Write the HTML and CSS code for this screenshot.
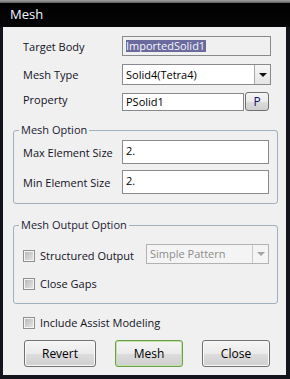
FILE: index.html
```html
<!DOCTYPE html>
<html lang="en">
  <head>
    <meta charset="UTF-8" />
    <meta name="viewport" content="width=device-width, initial-scale=1.0" />
    <title>Mesh</title>
    <link rel="stylesheet" href="styles.css">
  </head>
  <body>
    <div class="window">
      <div class="titlebar">Mesh</div>
      <div class="frame">
        <form class="content">
          <div class="row row-target">
            <label class="label">Target Body</label>
            <div class="field readonly"><span class="selected">ImportedSolid1</span></div>
          </div>

          <div class="row row-type">
            <label class="label">Mesh Type</label>
            <div class="combo">
              <span class="combo-text">Solid4(Tetra4)</span>
              <span class="combo-arrow"></span>
            </div>
          </div>

          <div class="row row-property">
            <label class="label">Property</label>
            <div class="field field-short">PSolid1</div>
            <button type="button" class="small-btn">P</button>
          </div>

          <fieldset class="group group-option">
            <legend>Mesh Option</legend>
            <div class="row row-size">
              <label class="label">Max Element Size</label>
              <div class="field field-tall">2.</div>
            </div>
            <div class="row row-size row-min">
              <label class="label">Min Element Size</label>
              <div class="field field-tall">2.</div>
            </div>
          </fieldset>

          <fieldset class="group group-output">
            <legend>Mesh Output Option</legend>
            <div class="row row-structured">
              <label class="check check-wide"><span class="box"></span>Structured Output</label>
              <div class="combo combo-disabled">
                <span class="combo-text">Simple Pattern</span>
                <span class="combo-arrow"></span>
              </div>
            </div>
            <div class="row row-gaps">
              <label class="check"><span class="box"></span>Close Gaps</label>
            </div>
          </fieldset>

          <div class="row row-assist">
            <label class="check"><span class="box"></span>Include Assist Modeling</label>
          </div>

          <div class="buttons">
            <button type="button" class="btn btn-revert">Revert</button>
            <button type="button" class="btn btn-default">Mesh</button>
            <button type="button" class="btn">Close</button>
          </div>
        </form>
      </div>
    </div>
  </body>
</html>
```

FILE: styles.css
```css
* {
  margin: 0;
  padding: 0;
  box-sizing: border-box;
}

body {
  font-family: "Open Sans", "Noto Sans", sans-serif;
  font-size: 11px;
  color: #12121e;
  background-color: #14141c;
}

.window {
  width: 290px;
  height: 379px;
  display: flex;
  flex-direction: column;
  background-color: #14141c;
}

.titlebar {
  height: 27px;
  padding: 3px 0 0 10px;
  line-height: 23px;
  font-size: 13px;
  color: #f4f6ff;
  background: linear-gradient(#a4a4a4 0, #5a5a5a 3px, #000 3px, #060608 100%);
}

.frame {
  flex: 1;
  padding: 0 4px 4px 3px;
}

.content {
  height: 100%;
  background-color: #f0f0f0;
  padding: 9px 8px 8px 10px;
}

.row {
  display: flex;
  align-items: center;
  padding-left: 10px;
}

.label {
  width: 99px;
  flex-shrink: 0;
}

.field {
  width: 149px;
  height: 20px;
  border: 1px solid #8a8a8e;
  background-color: #fff;
  padding: 1px 0 0 3px;
  line-height: 16px;
  color: #000;
}

.field.readonly {
  background-color: #f0f0f0;
  padding-top: 3px;
  line-height: 12px;
}

.selected {
  display: inline-block;
  background-color: #6a6a9c;
  color: #f6f6ff;
  padding-right: 1px;
}

.row-type {
  margin-top: 8px;
}

.combo {
  width: 149px;
  height: 21px;
  display: flex;
  border: 1px solid #8a8a8e;
  background-color: #fff;
  color: #000;
}

.combo-text {
  flex: 1;
  padding-left: 3px;
  line-height: 19px;
}

.combo-arrow {
  width: 16px;
  border-left: 1px solid #a8a8a8;
  background: linear-gradient(#f6f6f6, #e4e4e4);
  display: flex;
  align-items: center;
  justify-content: center;
}

.combo-arrow::after {
  content: "";
  border-left: 4px solid transparent;
  border-right: 4px solid transparent;
  border-top: 4px solid #111;
}

.row-property {
  margin-top: 7px;
  align-items: flex-start;
}

.field-short {
  width: 122px;
  height: 18px;
  margin-top: 1px;
  line-height: 15px;
  padding-top: 0;
}

.small-btn {
  width: 24px;
  height: 19px;
  margin-left: 1px;
  border: 1px solid #707070;
  border-radius: 3px;
  background: linear-gradient(#f4f4f4, #ebebeb 50%, #dcdcdc 51%, #cfcfcf);
  font-family: inherit;
  font-size: 12px;
  line-height: 15px;
  color: #10106a;
}

.group {
  min-inline-size: 0;
  border: 1px solid #9fb1be;
  border-radius: 3px;
  padding: 0 8px 9px 5px;
}

.group legend {
  padding: 0 2px;
  line-height: 16px;
  color: #1a1a30;
}

.group .row {
  padding-left: 4px;
}

.group-option {
  margin-top: 11px;
  padding-top: 2px;
}

.field-tall {
  height: 24px;
  padding-top: 2px;
}

.row-min {
  margin-top: 6px;
}

.group-output {
  margin-top: 13px;
  padding-top: 11px;
  padding-bottom: 13px;
}

.check {
  display: flex;
  align-items: center;
  height: 12px;
  line-height: 12px;
  white-space: nowrap;
}

.box {
  width: 12px;
  height: 12px;
  margin-right: 5px;
  border: 1px solid #8e8f8f;
  background: linear-gradient(135deg, #b4b4b4, #e8e8e8);
  box-shadow: inset 0 0 0 1px #f4f4f4;
}

.check-wide {
  width: 123px;
  flex-shrink: 0;
  margin-top: 4px;
}

.combo-disabled {
  width: 125px;
  height: 20px;
  border-color: #b2b2b2;
  background-color: #f4f4f4;
  color: #8c8c8c;
}

.combo-disabled .combo-text {
  line-height: 18px;
}

.combo-disabled .combo-arrow {
  border-left-color: #c8c8c8;
  background: #f4f4f4;
}

.combo-disabled .combo-arrow::after {
  border-top-color: #a4a4a4;
}

.row-gaps {
  margin-top: 14px;
}

.row-assist {
  margin-top: 13px;
}

.buttons {
  display: flex;
  justify-content: space-between;
  margin-top: 11px;
  padding: 0 8px 0 11px;
}

.btn {
  width: 68px;
  height: 27px;
  border: 1px solid #707070;
  border-radius: 3px;
  background: linear-gradient(#f4f4f4, #ebebeb 50%, #dddddd 51%, #cfcfcf);
  box-shadow: inset 0 0 0 1px #fafafa;
  font-family: inherit;
  font-size: 12px;
  color: #000;
}

.btn-revert {
  width: 72px;
}

.btn-default {
  border-color: #6a9e48;
  box-shadow: inset 0 0 0 1px #c2e2a8;
}
```
